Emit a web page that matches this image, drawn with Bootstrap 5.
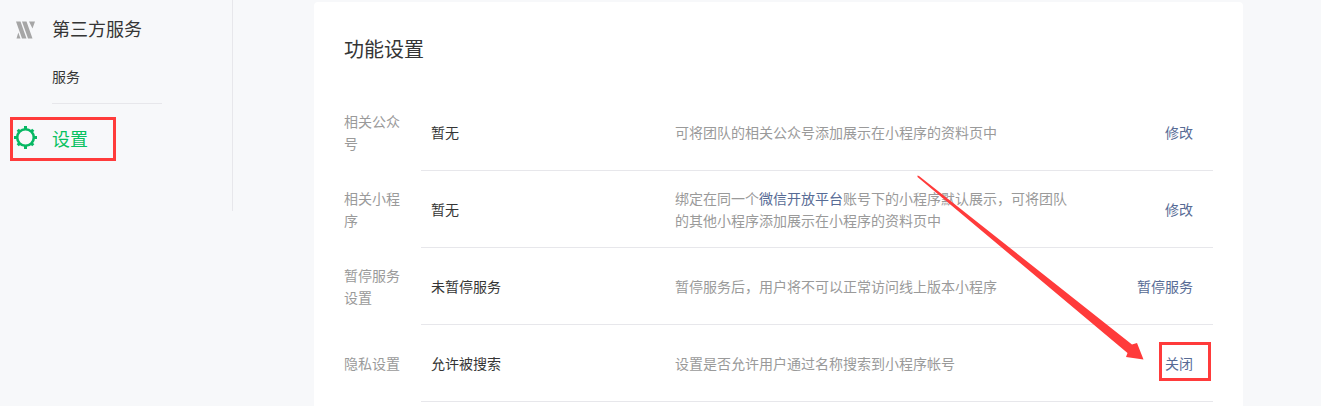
<!DOCTYPE html>
<html lang="zh">
<head>
<meta charset="utf-8">
<title>功能设置</title>
<link href="https://cdn.jsdelivr.net/npm/bootstrap@5.3.0/dist/css/bootstrap.min.css" rel="stylesheet">
<style>
html,body{height:406px;overflow:hidden}
body{background:#f7f8fa;font-family:"Liberation Sans","Noto Sans CJK SC",sans-serif;font-size:14px;color:#353535;position:relative}
.shell{height:406px}
.side{width:233px;height:211px;border-right:1px solid #e7e7eb;flex:none}
.side-head{height:20px;margin-top:20px;padding-left:16px;gap:16px}
.side-head span{font-size:18px;line-height:20px;color:#353535}
.side-sub{margin:27px 0 0 52px;width:110px;height:37px;border-bottom:1px solid #e7e7eb;font-size:14px;line-height:20px;color:#353535}
.side-set{margin-top:23px;padding-left:14px;gap:15px;height:24px}
.side-set svg{margin-bottom:3px}
.side-set span{font-size:18px;line-height:24px;color:#07c160;padding-top:2px}
.panel{width:929px;margin:2px 0 0 81px;height:420px;background:#fff;border-radius:4px;padding:36px 30px 0 30px}
.panel-title{font-size:20px;line-height:24px;margin:0 0 32px 0;font-weight:400;color:#353535}
.set-row{height:77px}
.set-name{width:77px;flex:none;line-height:1.6;color:#9a9a9a;padding:1px 20px 0 0}
.set-body{flex:1;border-bottom:1px solid #e7e7eb;padding:2px 20px 0 10px;height:77px}
.set-val{width:244px;flex:none;color:#353535}
.set-desc{width:400px;flex:none;line-height:1.6;color:#9a9a9a}
.set-desc a,.set-act a{color:#576b95;text-decoration:none}
.set-act{flex:1;text-align:right}
.mark-box{position:absolute;border:3px solid #ff3b3b}
.box-a{left:10px;top:117px;width:106px;height:44px}
.box-b{left:1159px;top:342px;width:52px;height:39px}
.arrow{position:absolute;left:0;top:0}
</style>
</head>
<body>
<div class="shell d-flex">
  <div class="side">
    <div class="side-head d-flex align-items-center">
      <svg width="20" height="18" viewBox="0 0 20 18"><path fill="#a6a6a6" d="M0 0.500h4.500l6 17H6zM6 0.500h4.500l6 17H12zM13 0.500h6l-2.500 7zM0.500 17.500l1.800-6 2.200 6z"/></svg>
      <span>第三方服务</span>
    </div>
    <div class="side-sub">服务</div>
    <div class="side-set d-flex align-items-center">
      <svg width="23" height="23" viewBox="0 0 23 23"><circle cx="11.500" cy="11.500" r="8.300" fill="none" stroke="#07b863" stroke-width="2.600"/><g fill="#07b863"><rect x="10" y="0" width="3" height="3"/><rect x="10" y="20" width="3" height="3"/><rect x="0" y="10" width="3" height="3"/><rect x="20" y="10" width="3" height="3"/><rect x="10" y="0.500" width="3" height="3" transform="rotate(45 11.500 11.500)"/><rect x="10" y="19.500" width="3" height="3" transform="rotate(45 11.500 11.500)"/><rect x="0.500" y="10" width="3" height="3" transform="rotate(45 11.500 11.500)"/><rect x="19.500" y="10" width="3" height="3" transform="rotate(45 11.500 11.500)"/></g></svg>
      <span>设置</span>
    </div>
  </div>
  <div class="panel">
    <h2 class="panel-title">功能设置</h2>
    <div class="set-row d-flex align-items-center">
      <div class="set-name">相关公众号</div>
      <div class="set-body d-flex align-items-center">
        <div class="set-val">暂无</div>
        <div class="set-desc">可将团队的相关公众号添加展示在小程序的资料页中</div>
        <div class="set-act"><a href="#">修改</a></div>
      </div>
    </div>
    <div class="set-row d-flex align-items-center">
      <div class="set-name">相关小程序</div>
      <div class="set-body d-flex align-items-center">
        <div class="set-val">暂无</div>
        <div class="set-desc"><span>绑定在同一个</span><a href="#">微信开放平台</a><span>账号下的小程序默认展示，可将团队的其他小程序添加展示在小程序的资料页中</span></div>
        <div class="set-act"><a href="#">修改</a></div>
      </div>
    </div>
    <div class="set-row d-flex align-items-center">
      <div class="set-name">暂停服务设置</div>
      <div class="set-body d-flex align-items-center">
        <div class="set-val">未暂停服务</div>
        <div class="set-desc">暂停服务后，用户将不可以正常访问线上版本小程序</div>
        <div class="set-act"><a href="#">暂停服务</a></div>
      </div>
    </div>
    <div class="set-row d-flex align-items-center">
      <div class="set-name">隐私设置</div>
      <div class="set-body d-flex align-items-center">
        <div class="set-val">允许被搜索</div>
        <div class="set-desc">设置是否允许用户通过名称搜索到小程序帐号</div>
        <div class="set-act"><a href="#">关闭</a></div>
      </div>
    </div>
  </div>
</div>
<div class="mark-box box-a"></div>
<div class="mark-box box-b"></div>
<svg class="arrow" width="1321" height="406" viewBox="0 0 1321 406"><path fill="#ff3b3b" d="M917.500 175.500L919 176L1132 344.500L1137 343L1143.500 359.500L1126 357L1127.500 353L917.500 177Z"/></svg>
</body>
</html>
